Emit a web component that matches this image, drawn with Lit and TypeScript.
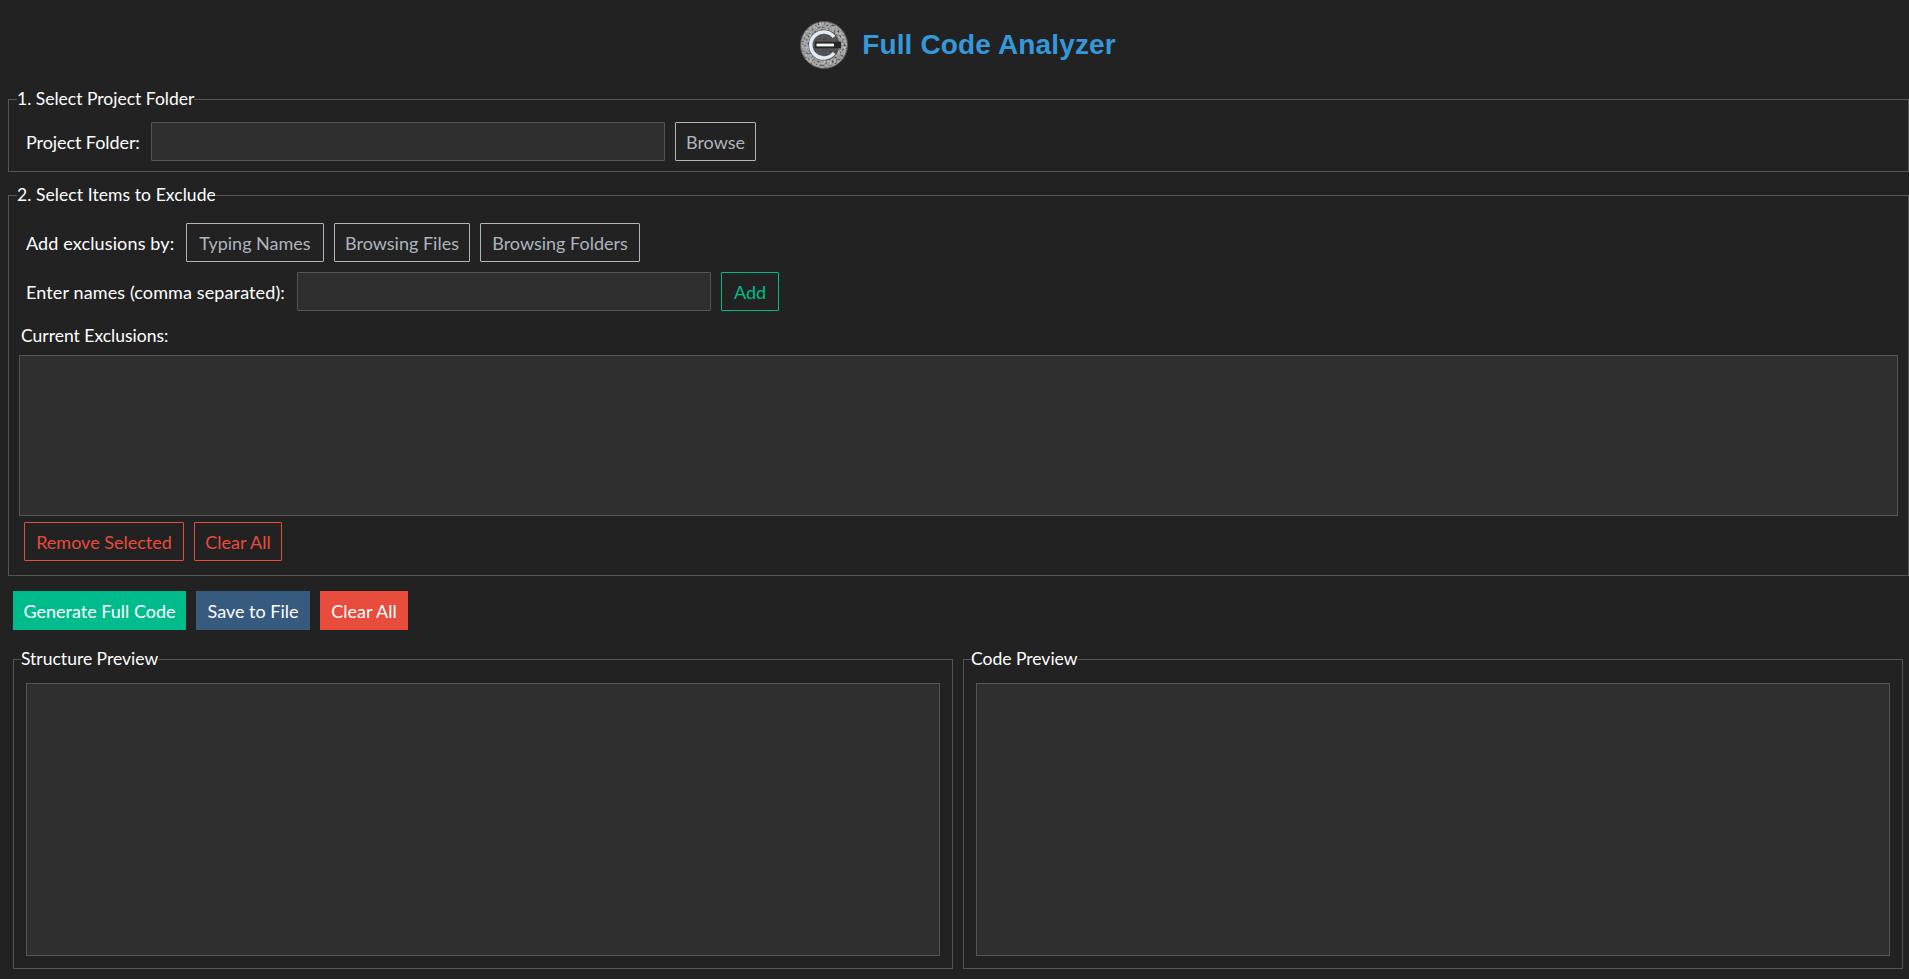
import { LitElement, html, css } from 'lit';
import { customElement } from 'lit/decorators.js';

@customElement('app-root')
export class AppRoot extends LitElement {
  static styles = css`
    :host {
      display: block;
      box-sizing: border-box;
      height: 979px;
      overflow: hidden;
      background: #222222;
      color: #ffffff;
      font-family: "Lato", "Open Sans", sans-serif;
      font-size: 18px;
      line-height: 20px;
    }
    * { box-sizing: border-box; }

    .header {
      display: flex;
      align-items: center;
      justify-content: center;
      gap: 14px;
      height: 89px;
      padding-left: 7px;
    }
    .logo { width: 48px; height: 48px; display: block; }
    .title {
      font-family: "Liberation Sans", Arial, sans-serif;
      font-weight: 700;
      font-size: 28px;
      letter-spacing: 0.15px;
      color: #3498db;
    }

    fieldset {
      margin: 0;
      min-width: 0;
      border: 1px solid #555555;
    }
    legend { padding: 0; font-size: 17.5px; }

    .group-a { margin-left: 8px; padding: 13px 0 10px 17px; }
    .group-a legend { margin-left: -9px; }
    .group-b { margin: 13px 0 0 8px; padding: 18px 10px 14px 10px; }
    .group-b legend { margin-left: -2px; letter-spacing: 0.08px; }
    .row { display: flex; align-items: center; gap: 10px; }
    .group-b .row { padding-left: 7px; }
    .row + .row { margin-top: 10px; }
    .caption { margin: 15px 0 9px 2px; font-size: 17.5px; }

    label { white-space: nowrap; }
    .label-folder { width: 115px; letter-spacing: -0.08px; }
    .label-by { width: 150px; letter-spacing: 0.13px; }
    .label-names { width: 261px; letter-spacing: 0.12px; }

    input {
      height: 39px;
      border: 1px solid #555555;
      border-radius: 1px;
      background: #2f2f2f;
      color: #ffffff;
      font: inherit;
    }
    .folder-input { width: 514px; }
    .names-input { width: 414px; }

    button {
      height: 39px;
      padding: 0;
      border: 1px solid #adb5bd;
      border-radius: 1px;
      background: transparent;
      color: #adb5bd;
      font: inherit;
      text-align: center;
    }
    button.ok { border-color: #00bc8c; color: #00bc8c; }
    button.danger { border-color: #e74c3c; color: #e74c3c; }

    .w-browse { width: 81px; }
    .w-typing { width: 138px; }
    .w-files { width: 136px; }
    .w-folders { width: 160px; }
    .w-add { width: 58px; }
    .w-remove { width: 160px; }
    .w-clear { width: 88px; }
    .w-generate { width: 173px; }
    .w-save { width: 114px; }

    .list {
      height: 161px;
      border: 1px solid #555555;
      background: #2f2f2f;
    }
    .list-actions { margin-top: 6px; padding-left: 5px; gap: 10px; display: flex; }

    .actions { display: flex; gap: 10px; margin: 15px 0 19px 13px; }
    .actions button { border: 0; border-radius: 0; color: #ffffff; }
    .actions .generate { background: #00bc8c; }
    .actions .save { background: #375a7f; }
    .actions .clear { background: #e74c3c; }

    .previews {
      display: grid;
      grid-template-columns: 940px 940px;
      gap: 10px;
      margin-left: 13px;
    }
    .previews fieldset { height: 320px; padding: 4px 12px 12px 12px; }
    .previews legend { margin-left: -5px; }
    .pane {
      height: 273px;
      margin-top: 10px;
      border: 1px solid #555555;
      background: #2f2f2f;
    }
  `;

  private renderLogo() {
    return html`
      <svg class="logo" viewBox="0 0 48 48" role="img" aria-label="Logo">
        <defs>
          <filter id="grain" x="0" y="0" width="100%" height="100%">
            <feTurbulence type="fractalNoise" baseFrequency="0.5" numOctaves="2" seed="7" />
            <feColorMatrix
              type="matrix"
              values="2.2 0 0 0 -0.6  2.2 0 0 0 -0.6  2.2 0 0 0 -0.6  0 0 0 0 1"
            />
            <feComposite in2="SourceAlpha" operator="in" />
          </filter>
          <filter id="soft" x="-5%" y="-5%" width="110%" height="110%">
            <feGaussianBlur stdDeviation="0.45" />
          </filter>
        </defs>
        <g filter="url(#soft)">
          <circle cx="24" cy="24" r="23.5" fill="#858585" />
          <circle cx="24" cy="24" r="23.5" fill="#000" filter="url(#grain)" opacity="0.45" />
          <circle cx="24" cy="24" r="23.5" fill="none" stroke="#555555" stroke-width="1" />
          <circle cx="24" cy="24" r="15.5" fill="#3a3a3a" opacity="0.75" />
          <path d="M34 16A13 13 0 1 0 34 32" fill="none" stroke="#dfecf8" stroke-width="3.6" />
          <path d="M15 24H41" stroke="#262626" stroke-width="6.5" />
          <path d="M16.5 24H34" stroke="#f4f4f4" stroke-width="2.8" />
        </g>
      </svg>
    `;
  }

  render() {
    return html`
      <div class="header">
        ${this.renderLogo()}
        <div class="title">Full Code Analyzer</div>
      </div>

      <fieldset class="group-a">
        <legend>1. Select Project Folder</legend>
        <div class="row">
          <label class="label-folder">Project Folder:</label>
          <input class="folder-input" type="text" />
          <button class="w-browse">Browse</button>
        </div>
      </fieldset>

      <fieldset class="group-b">
        <legend>2. Select Items to Exclude</legend>
        <div class="row">
          <label class="label-by">Add exclusions by:</label>
          <button class="w-typing">Typing Names</button>
          <button class="w-files">Browsing Files</button>
          <button class="w-folders">Browsing Folders</button>
        </div>
        <div class="row">
          <label class="label-names">Enter names (comma separated):</label>
          <input class="names-input" type="text" />
          <button class="ok w-add">Add</button>
        </div>
        <div class="caption">Current Exclusions:</div>
        <div class="list"></div>
        <div class="list-actions">
          <button class="danger w-remove">Remove Selected</button>
          <button class="danger w-clear">Clear All</button>
        </div>
      </fieldset>

      <div class="actions">
        <button class="generate w-generate">Generate Full Code</button>
        <button class="save w-save">Save to File</button>
        <button class="clear w-clear">Clear All</button>
      </div>

      <div class="previews">
        <fieldset>
          <legend>Structure Preview</legend>
          <div class="pane"></div>
        </fieldset>
        <fieldset>
          <legend>Code Preview</legend>
          <div class="pane"></div>
        </fieldset>
      </div>
    `;
  }
}
